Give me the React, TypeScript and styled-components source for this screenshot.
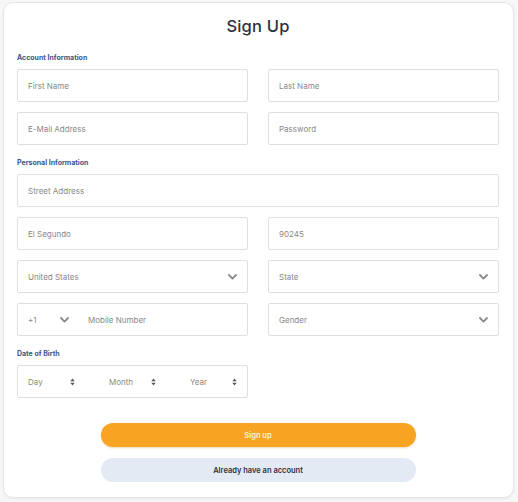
import styled, { createGlobalStyle } from 'styled-components';

const GlobalStyle = createGlobalStyle`
  html, body {
    margin: 0;
    padding: 0;
    background: #f7f7f7;
    font-family: 'Inter', 'Noto Sans', sans-serif;
  }
`;

const Page = styled.div`
  width: 518px;
  height: 502px;
  padding: 2px 4px 4px 3px;
  box-sizing: border-box;
`;

const Card = styled.form`
  height: 100%;
  box-sizing: border-box;
  background: #fff;
  border: 1px solid #e6e6e6;
  border-radius: 10px;
  box-shadow: 0 1px 3px rgba(0, 0, 0, 0.06);
  padding: 10px 14px 0 13px;
  display: flex;
  flex-direction: column;
`;

const Title = styled.h1`
  margin: 3px 0 17px;
  text-align: center;
  font-size: 16.5px;
  font-weight: 500;
  color: #2c3140;
  letter-spacing: 0.2px;
`;

const Section = styled.div`
  font-size: 7px;
  font-weight: 700;
  color: #3d5586;
  margin: 0 0 7px;
`;

const Grid = styled.div`
  display: grid;
  grid-template-columns: 1fr 1fr;
  column-gap: 20px;
  row-gap: 10px;
  margin-bottom: 13px;
`;

const Field = styled.div<{ $wide?: boolean }>`
  grid-column: ${p => (p.$wide ? '1 / -1' : 'auto')};
  height: 33px;
  box-sizing: border-box;
  border: 1px solid #dfdfdf;
  border-radius: 2px;
  background: #fff;
  display: flex;
  align-items: center;
  padding: 0 10px;
  font-size: 8px;
  color: #888;
`;

const Text = styled.span`
  flex: 1;
`;

const Cell = styled.div`
  width: 47px;
  display: flex;
  align-items: center;
  justify-content: space-between;
  & + & {
    margin-left: 34px;
  }
`;

const Code = styled.div`
  width: 41px;
  display: flex;
  align-items: center;
  justify-content: space-between;
  margin-right: 19px;
`;

const Actions = styled.div`
  display: flex;
  flex-direction: column;
  align-items: center;
  gap: 11px;
  margin-top: 12px;
`;

const Button = styled.button<{ $primary?: boolean }>`
  width: 315px;
  height: 24px;
  border: none;
  border-radius: 12px;
  font-family: inherit;
  font-size: 7.5px;
  font-weight: 600;
  background: ${p => (p.$primary ? '#f8a423' : '#e4eaf3')};
  color: ${p => (p.$primary ? '#fff3dc' : '#2c3140')};
  box-shadow: ${p => (p.$primary ? '0 1px 2px rgba(200,130,0,0.3)' : 'none')};
`;

const Chevron = () => (
  <svg width="9" height="6" viewBox="0 0 9 6">
    <polyline points="1,1 4.5,4.6 8,1" fill="none" stroke="#8a8a8a" strokeWidth="1.8" strokeLinecap="round" strokeLinejoin="round" />
  </svg>
);

const Sorter = () => (
  <svg width="5" height="8" viewBox="0 0 5 8">
    <polygon points="0.3,3.3 2.5,0.6 4.7,3.3" fill="#555" />
    <polygon points="0.3,4.7 2.5,7.4 4.7,4.7" fill="#555" />
  </svg>
);

const Select = ({ label }: { label: string }) => (
  <Field>
    <Text>{label}</Text>
    <Chevron />
  </Field>
);

const App = (): JSX.Element => (
  <>
    <GlobalStyle />
    <Page>
      <Card>
        <Title>Sign Up</Title>

        <Section>Account Information</Section>
        <Grid>
          <Field>First Name</Field>
          <Field>Last Name</Field>
          <Field>E-Mail Address</Field>
          <Field>Password</Field>
        </Grid>

        <Section>Personal Information</Section>
        <Grid>
          <Field $wide>Street Address</Field>
          <Field>El Segundo</Field>
          <Field>90245</Field>
          <Select label="United States" />
          <Select label="State" />
          <Field>
            <Code>
              <span>+1</span>
              <Chevron />
            </Code>
            <Text>Mobile Number</Text>
          </Field>
          <Select label="Gender" />
        </Grid>

        <Section>Date of Birth</Section>
        <Grid>
          <Field>
            <Cell>
              <span>Day</span>
              <Sorter />
            </Cell>
            <Cell>
              <span>Month</span>
              <Sorter />
            </Cell>
            <Cell>
              <span>Year</span>
              <Sorter />
            </Cell>
          </Field>
        </Grid>

        <Actions>
          <Button type="button" $primary>
            Sign up
          </Button>
          <Button type="button">Already have an account</Button>
        </Actions>
      </Card>
    </Page>
  </>
);

export default App;
